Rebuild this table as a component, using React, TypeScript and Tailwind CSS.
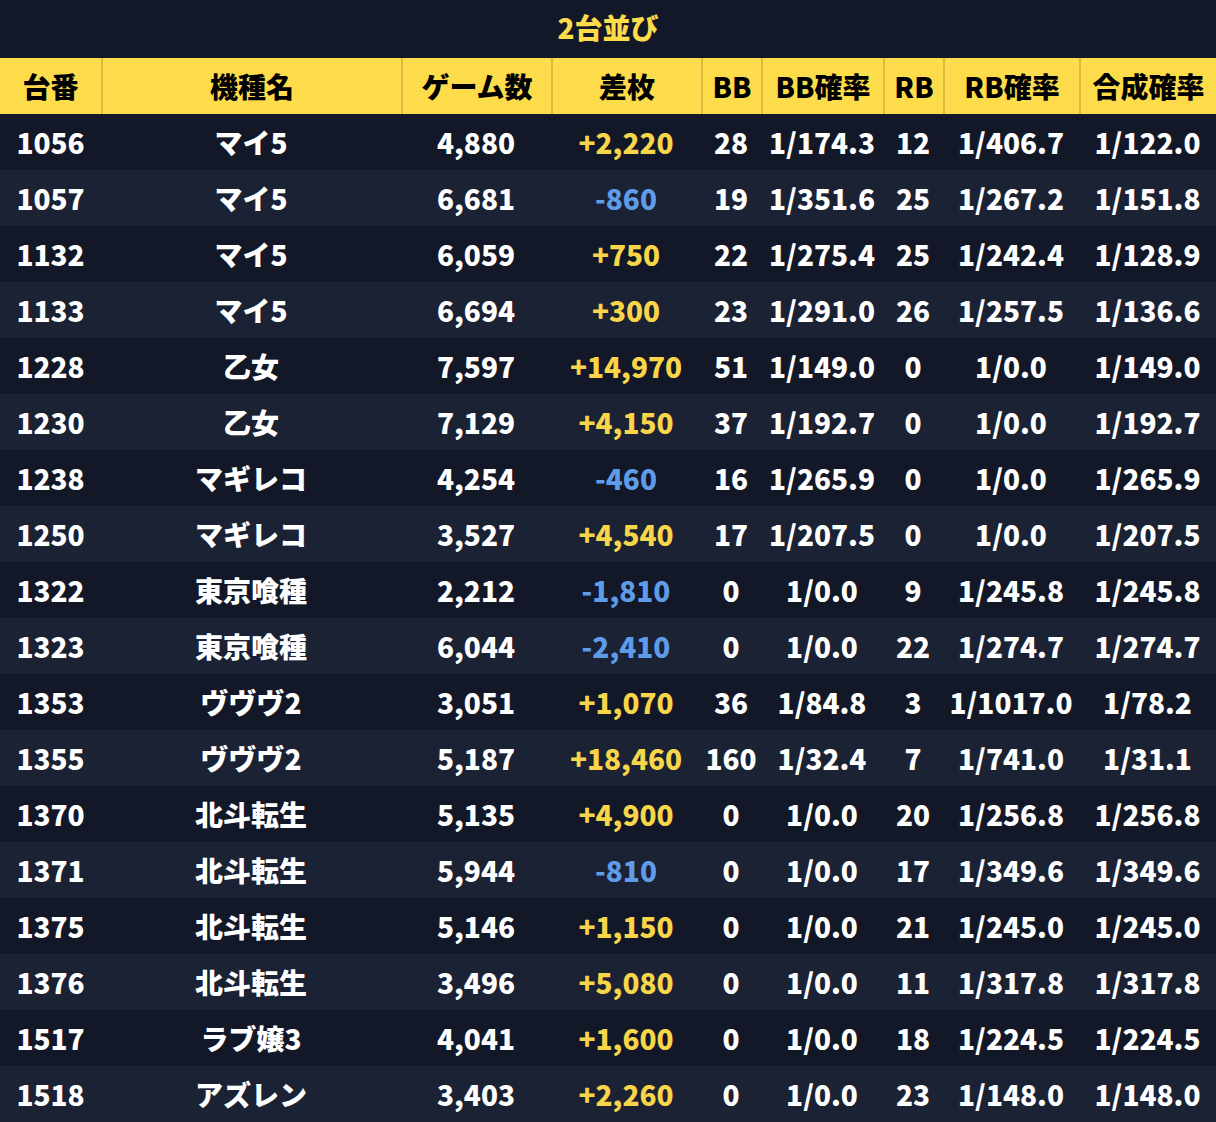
const rows: [string, string, string, string, string, string, string, string, string][] = [
  ["1056", "マイ5", "4,880", "+2,220", "28", "1/174.3", "12", "1/406.7", "1/122.0"],
  ["1057", "マイ5", "6,681", "-860", "19", "1/351.6", "25", "1/267.2", "1/151.8"],
  ["1132", "マイ5", "6,059", "+750", "22", "1/275.4", "25", "1/242.4", "1/128.9"],
  ["1133", "マイ5", "6,694", "+300", "23", "1/291.0", "26", "1/257.5", "1/136.6"],
  ["1228", "乙女", "7,597", "+14,970", "51", "1/149.0", "0", "1/0.0", "1/149.0"],
  ["1230", "乙女", "7,129", "+4,150", "37", "1/192.7", "0", "1/0.0", "1/192.7"],
  ["1238", "マギレコ", "4,254", "-460", "16", "1/265.9", "0", "1/0.0", "1/265.9"],
  ["1250", "マギレコ", "3,527", "+4,540", "17", "1/207.5", "0", "1/0.0", "1/207.5"],
  ["1322", "東京喰種", "2,212", "-1,810", "0", "1/0.0", "9", "1/245.8", "1/245.8"],
  ["1323", "東京喰種", "6,044", "-2,410", "0", "1/0.0", "22", "1/274.7", "1/274.7"],
  ["1353", "ヴヴヴ2", "3,051", "+1,070", "36", "1/84.8", "3", "1/1017.0", "1/78.2"],
  ["1355", "ヴヴヴ2", "5,187", "+18,460", "160", "1/32.4", "7", "1/741.0", "1/31.1"],
  ["1370", "北斗転生", "5,135", "+4,900", "0", "1/0.0", "20", "1/256.8", "1/256.8"],
  ["1371", "北斗転生", "5,944", "-810", "0", "1/0.0", "17", "1/349.6", "1/349.6"],
  ["1375", "北斗転生", "5,146", "+1,150", "0", "1/0.0", "21", "1/245.0", "1/245.0"],
  ["1376", "北斗転生", "3,496", "+5,080", "0", "1/0.0", "11", "1/317.8", "1/317.8"],
  ["1517", "ラブ嬢3", "4,041", "+1,600", "0", "1/0.0", "18", "1/224.5", "1/224.5"],
  ["1518", "アズレン", "3,403", "+2,260", "0", "1/0.0", "23", "1/148.0", "1/148.0"],
];

const headers = ["台番", "機種名", "ゲーム数", "差枚", "BB", "BB確率", "RB", "RB確率", "合成確率"];

const cols = "grid grid-cols-[101px_300px_150px_150px_60px_122px_60px_136px_137px]";

export default function App() {
  return (
    <div
      className="w-[1216px] bg-[#121827] text-white font-black text-[28px]"
      style={{ fontFamily: '"Noto Sans CJK JP", "Noto Sans", sans-serif' }}
    >
      <div className="h-[58px] flex items-center justify-center pb-[4px] text-[#fcdc4a]">2台並び</div>
      <div className={`${cols} h-[56px] bg-[#fcdc4a] text-black`}>
        {headers.map((h, i) => (
          <div
            key={h}
            className={`flex items-center justify-center ${i > 0 ? "border-l-2 border-[#d9bd3c]" : ""}`}
          >
            {h}
          </div>
        ))}
      </div>
      {rows.map((r, i) => (
        <div key={r[0]} className={`${cols} h-[56px] ${i % 2 ? "bg-[#1b2234]" : "bg-[#121827]"}`}>
          {r.map((c, j) => (
            <div
              key={j}
              className={`flex items-center justify-center ${
                j === 3 ? (c.startsWith("-") ? "text-[#5e9ce8]" : "text-[#f8d549]") : ""
              }`}
            >
              {c}
            </div>
          ))}
        </div>
      ))}
    </div>
  );
}
